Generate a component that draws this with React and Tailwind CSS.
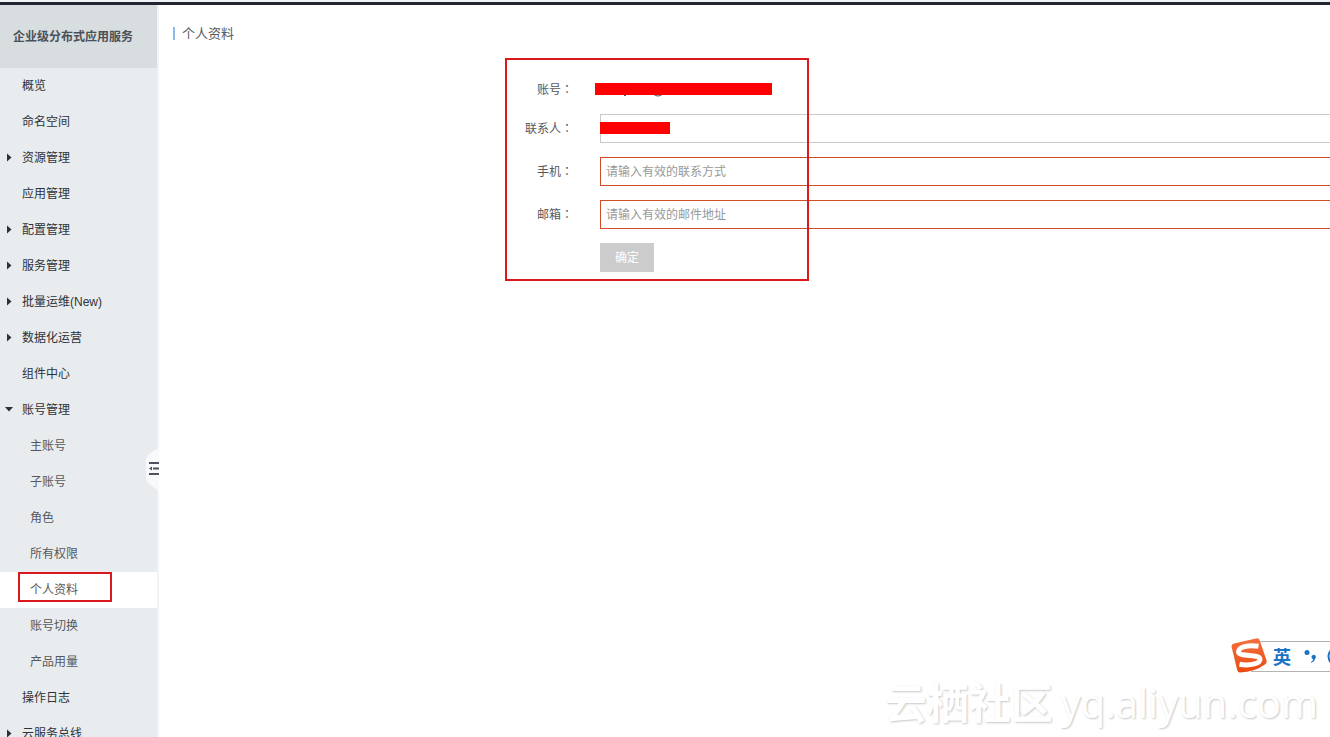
import clsx from "clsx";

const menu = [
  { label: "概览" },
  { label: "命名空间" },
  { label: "资源管理", arrow: "right" },
  { label: "应用管理" },
  { label: "配置管理", arrow: "right" },
  { label: "服务管理", arrow: "right" },
  { label: "批量运维(New)", arrow: "right" },
  { label: "数据化运营", arrow: "right" },
  { label: "组件中心" },
  {
    label: "账号管理",
    arrow: "down",
    children: ["主账号", "子账号", "角色", "所有权限", "个人资料", "账号切换", "产品用量"],
  },
  { label: "操作日志" },
  { label: "云服务总线", arrow: "right" },
];

const current = "个人资料";

function Arrow({ dir }) {
  return (
    <svg className="h-3 w-3" viewBox="0 0 12 12" fill="#2b3138">
      {dir === "right" && <path d="M4 1.500l4.500 4-4.500 4z" />}
      {dir === "down" && <path d="M2 3h8L6 7.500z" />}
    </svg>
  );
}

function SubItem({ label }) {
  const active = label === current;

  return (
    <li>
      <a
        href="#"
        aria-current={active ? "page" : undefined}
        className={clsx("relative flex h-9 items-center pl-[30px] text-[#55595d]", active && "bg-white")}
      >
        {label}
        {active && <span className="absolute top-0 left-[18px] h-[30px] w-[94px] border-2 border-[#d9191c]" />}
      </a>
    </li>
  );
}

function Sidebar() {
  return (
    <aside className="relative w-[159px] shrink-0 border-r-2 border-[#f1f3f5] bg-[#e8ecef]">
      <h1 className="flex h-[63px] items-center bg-[#d8dde0] pl-[13px] text-xs font-bold text-[#4a5158]">
        企业级分布式应用服务
      </h1>
      <ul>
        {menu.map((item) => (
          <li key={item.label}>
            <a href="#" className="flex h-9 items-center gap-[7px] pl-[3px] text-[#2f3337]">
              <Arrow dir={item.arrow} />
              {item.label}
            </a>
            {item.children && (
              <ul>
                {item.children.map((label) => (
                  <SubItem key={label} label={label} />
                ))}
              </ul>
            )}
          </li>
        ))}
      </ul>
      <button type="button" aria-label="收起菜单" className="absolute top-[440px] -right-0.5">
        <svg className="h-12 w-[13px]" viewBox="0 0 13 48">
          <path d="M13 3L6 7Q0 10 0 15v18q0 5 6 8l7 5z" fill="#f8f9fa" />
          <path d="M3 18h10M7 23.500h6M3 29h10" stroke="#4c535f" strokeWidth="2" />
          <path d="M3 23.500l3-2v4z" fill="#4c535f" />
        </svg>
      </button>
    </aside>
  );
}

function Label({ htmlFor, children }) {
  return (
    <label htmlFor={htmlFor} className="w-[414px] shrink-0 text-right text-[#55595d]">
      {children}
      <span className="font-['Noto_Sans_CJK_TC',sans-serif]">：</span>
    </label>
  );
}

function Field({ id, label, invalid, placeholder, children }) {
  return (
    <div className="flex items-center gap-[27px]">
      <Label htmlFor={id}>{label}</Label>
      <div className="relative flex flex-1">
        <input
          id={id}
          type="text"
          placeholder={placeholder}
          className={clsx(
            "h-[29px] min-w-0 flex-1 border border-r-0 bg-white px-[5px] text-xs placeholder:text-[#999]",
            invalid ? "border-[#cf4e28]" : "border-[#c9c9c9]"
          )}
        />
        {children}
      </div>
    </div>
  );
}

function ProfileForm() {
  return (
    <form className="relative flex flex-col gap-3.5 pt-[18px]">
      <div className="flex h-[21px] items-center gap-[22px]">
        <Label htmlFor="account">账号</Label>
        <output id="account" className="block">
          <svg className="h-4 w-[177px]" viewBox="0 0 177 16">
            <path d="M29 13.500h2M58 12q5 4 10 0" fill="none" stroke="#5a4a4a" />
            <path d="M0 1h177v12H0z" fill="#ff0000" />
          </svg>
        </output>
      </div>
      <Field id="contact" label="联系人">
        <span className="absolute top-2 left-0 h-3 w-[70px] bg-[#ff0000]" />
      </Field>
      <Field id="phone" label="手机" placeholder="请输入有效的联系方式" invalid />
      <Field id="email" label="邮箱" placeholder="请输入有效的邮件地址" invalid />
      <button type="submit" className="ml-[441px] h-[29px] w-[54px] bg-[#cccccc] text-white">
        确定
      </button>
      <span className="pointer-events-none absolute -top-[3px] left-[346px] h-[223px] w-[304px] border-2 border-[#d9191c]" />
    </form>
  );
}

function InputMethodBar() {
  return (
    <div className="absolute right-0 bottom-[63px] flex w-[99px] items-center">
      <svg className="z-10 h-9 w-9 shrink-0" viewBox="0 0 36 36">
        <defs>
          <linearGradient id="sogou" x1="0" y1="0" x2="0" y2="1">
            <stop offset="0" stopColor="#f4703f" />
            <stop offset="1" stopColor="#ea4a10" />
          </linearGradient>
        </defs>
        <path
          d="M3 5.500L25 .4q3-.7 3.800 2L35.400 22q.8 3-1.500 4.500Q24 34 9 34.400q-2.200 0-2.800-2.500L.6 9Q0 6.300 3 5.500z"
          fill="url(#sogou)"
        />
        <path
          d="M27.500 8.300C17 6.500 7.500 9 7.500 13.800c0 5.500 21 1.700 21.500 7.200.4 5-11 7-20.500 5.200"
          fill="none"
          stroke="#fff"
          strokeWidth="5"
        />
      </svg>
      <div className="-ml-4 flex h-[31px] flex-1 items-center border-y border-[#b3b3b3] bg-white pl-[22px]">
        <span className="pt-1 text-lg leading-none font-bold text-[#1b73c4]">英</span>
        <svg className="ml-auto h-5 w-[28px]" viewBox="0 0 28 20" fill="#1b73c4">
          <circle cx="5" cy="6.500" r="2.500" />
          <path d="M9.500 11a2.200 2.200 0 1 1 3.800 1.500q-.8 3.500-4 4.500l-.3-1q2-1 2.200-2.700-1.700-.4-1.700-2.300z" />
          <path d="M29 4q-5 6 0 13" fill="none" stroke="#1b73c4" strokeWidth="2" />
        </svg>
      </div>
    </div>
  );
}

function Watermark() {
  return (
    <p className="pointer-events-none absolute right-3 bottom-2.5 flex items-center gap-2 leading-none whitespace-nowrap text-white [text-shadow:1px_1px_2px_#c8c8c8]">
      <span className="text-[42px] font-bold">云栖社区</span>
      <span className="pb-1 font-['Open_Sans',sans-serif] text-[40px] font-medium">yq.aliyun.com</span>
    </p>
  );
}

export default function App() {
  return (
    <div className="relative flex h-screen flex-col overflow-hidden bg-white font-['Liberation_Sans','Noto_Sans_CJK_SC',sans-serif] text-xs">
      <div className="h-[5px] shrink-0 border-b-3 border-[#22262e] bg-[#eff3f8]" />
      <div className="flex flex-1">
        <Sidebar />
        <main className="min-w-0 flex-1">
          <div className="flex h-14 items-center pl-[14px]">
            <h2 className="border-l-2 border-[#8db9e8] pl-[7px] text-[13px] leading-[13px] text-[#55595d]">
              个人资料
            </h2>
          </div>
          <ProfileForm />
        </main>
      </div>
      <InputMethodBar />
      <Watermark />
    </div>
  );
}
